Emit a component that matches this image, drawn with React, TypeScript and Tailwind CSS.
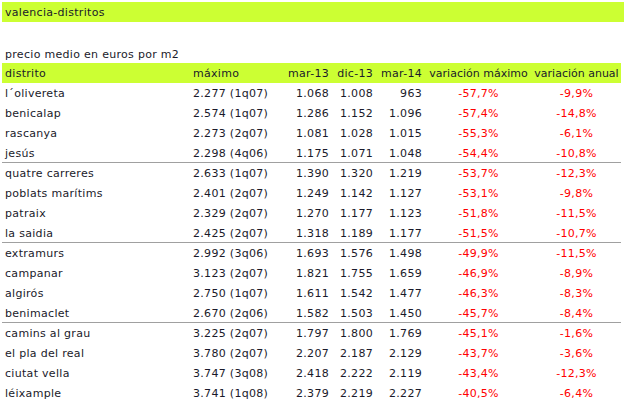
import React from 'react';

type Row = [string, string, string, string, string, string, string];

const groups: Row[][] = [
  [
    ['l´olivereta', '2.277 (1q07)', '1.068', '1.008', '963', '-57,7%', '-9,9%'],
    ['benicalap', '2.574 (1q07)', '1.286', '1.152', '1.096', '-57,4%', '-14,8%'],
    ['rascanya', '2.273 (2q07)', '1.081', '1.028', '1.015', '-55,3%', '-6,1%'],
    ['jesús', '2.298 (4q06)', '1.175', '1.071', '1.048', '-54,4%', '-10,8%'],
  ],
  [
    ['quatre carreres', '2.633 (1q07)', '1.390', '1.320', '1.219', '-53,7%', '-12,3%'],
    ['poblats marítims', '2.401 (2q07)', '1.249', '1.142', '1.127', '-53,1%', '-9,8%'],
    ['patraix', '2.329 (2q07)', '1.270', '1.177', '1.123', '-51,8%', '-11,5%'],
    ['la saidia', '2.425 (2q07)', '1.318', '1.189', '1.177', '-51,5%', '-10,7%'],
  ],
  [
    ['extramurs', '2.992 (3q06)', '1.693', '1.576', '1.498', '-49,9%', '-11,5%'],
    ['campanar', '3.123 (2q07)', '1.821', '1.755', '1.659', '-46,9%', '-8,9%'],
    ['algirós', '2.750 (1q07)', '1.611', '1.542', '1.477', '-46,3%', '-8,3%'],
    ['benimaclet', '2.670 (2q06)', '1.582', '1.503', '1.450', '-45,7%', '-8,4%'],
  ],
  [
    ['camins al grau', '3.225 (2q07)', '1.797', '1.800', '1.769', '-45,1%', '-1,6%'],
    ['el pla del real', '3.780 (2q07)', '2.207', '2.187', '2.129', '-43,7%', '-3,6%'],
    ['ciutat vella', '3.747 (3q08)', '2.418', '2.222', '2.119', '-43,4%', '-12,3%'],
    ['léixample', '3.741 (1q08)', '2.379', '2.219', '2.227', '-40,5%', '-6,4%'],
  ],
];

const cols = 'grid grid-cols-[188px_90px_52px_44px_49px_107px_89px] h-5 items-center pt-px';

const DataRow: React.FC<{ row: Row; last: boolean }> = ({ row, last }) => (
  <div className={`${cols} ${last ? 'border-b border-[#a0a0a0]' : ''}`}>
    <span className="pl-[3px] whitespace-nowrap">{row[0]}</span>
    <span className="pl-[3px] whitespace-nowrap">{row[1]}</span>
    <span className="pr-[3px] text-right">{row[2]}</span>
    <span className="pr-[3px] text-right">{row[3]}</span>
    <span className="pr-[3px] text-right">{row[4]}</span>
    <span className="text-center text-[#ff0000]">{row[5]}</span>
    <span className="text-center text-[#ff0000]">{row[6]}</span>
  </div>
);

export default function App() {
  return (
    <div className="w-[624px] h-[406px] overflow-hidden bg-white text-[11px] tracking-[0.3px] leading-none text-[#1a1a2a] font-['DejaVu_Sans',sans-serif]">
      <div className="ml-[2px] mt-[2px] h-5 bg-[#ccff33] flex items-center pl-[3px] pt-px">valencia-distritos</div>

      <div className="ml-[2px] mt-[23px] h-[18px] flex items-center pl-[3px] pt-px">precio medio en euros por m2</div>

      <div className="ml-[2px] w-[619px]">
        <div className={`${cols} bg-[#ccff33]`}>
          <span className="pl-[3px]">distrito</span>
          <span className="pl-[3px]">máximo</span>
          <span className="pr-[3px] text-right">mar-13</span>
          <span className="pr-[3px] text-right">dic-13</span>
          <span className="pr-[3px] text-right">mar-14</span>
          <span className="text-center whitespace-nowrap tracking-normal">variación máximo</span>
          <span className="text-center whitespace-nowrap tracking-normal">variación anual</span>
        </div>
        {groups.map((g, gi) =>
          g.map((r, ri) => <DataRow key={`${gi}-${ri}`} row={r} last={ri === 3 && gi < 3} />)
        )}
      </div>
    </div>
  );
}
